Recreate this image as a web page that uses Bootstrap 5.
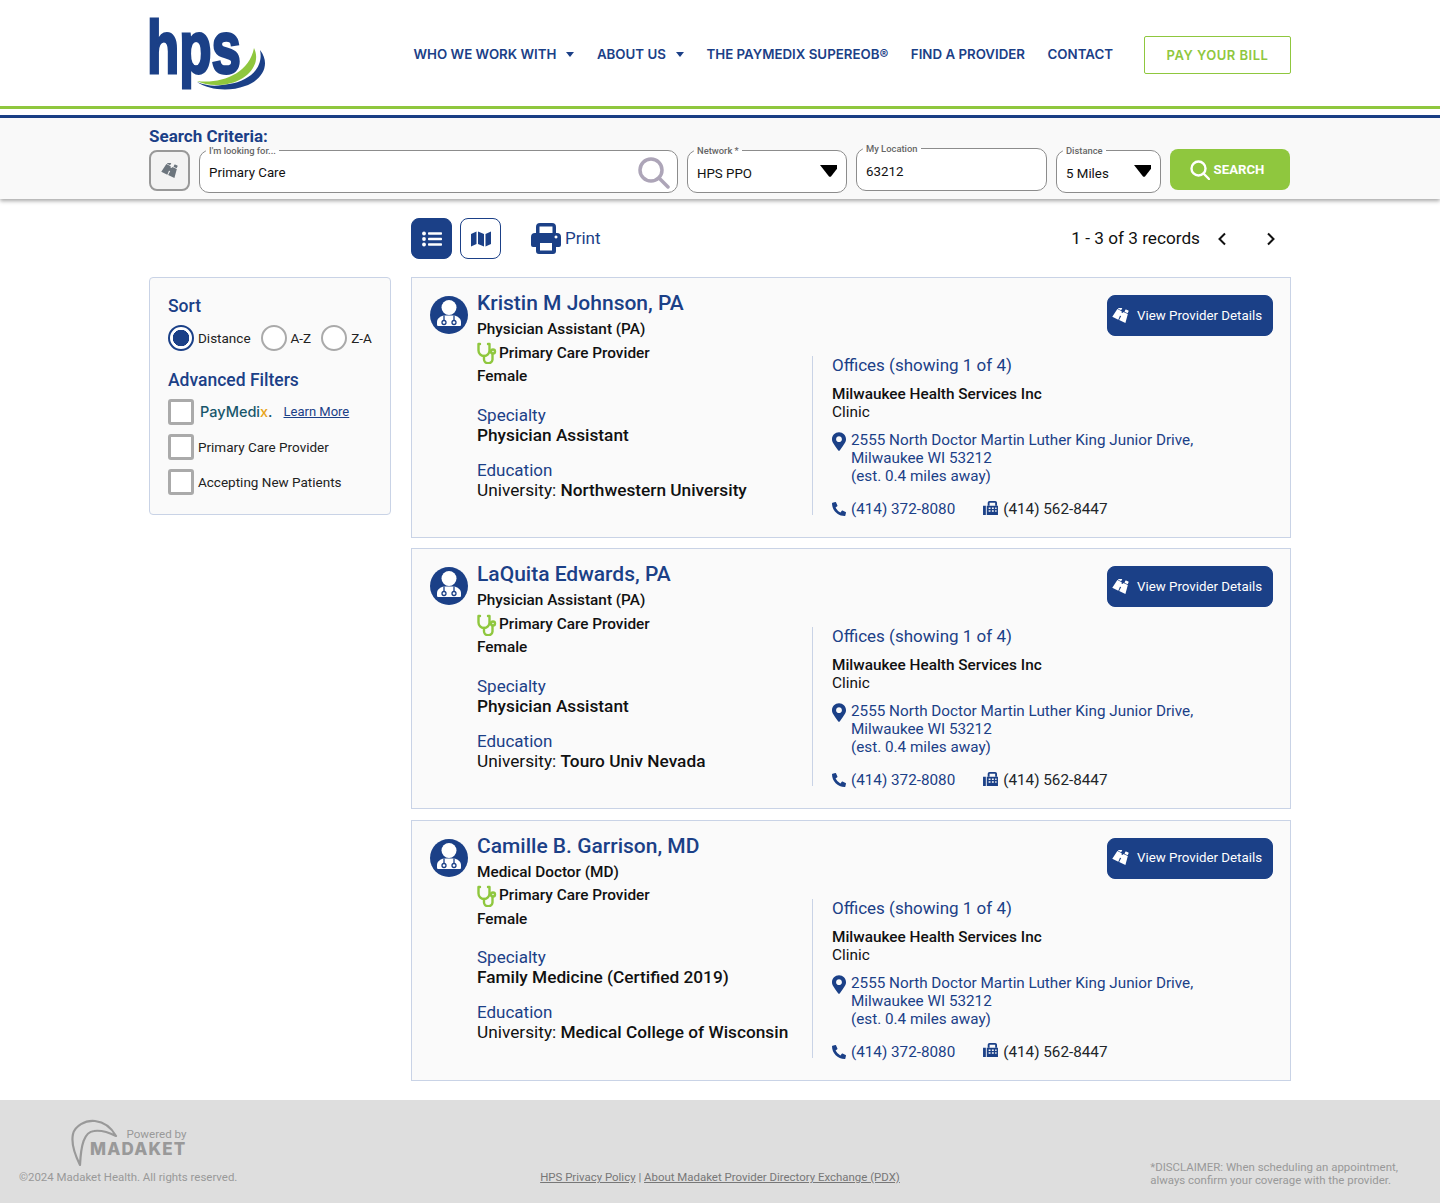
<!DOCTYPE html>
<html lang="en">
<head>
  <meta charset="UTF-8" />
  <meta name="viewport" content="width=device-width, initial-scale=1.0">
  <title>Provider Search</title>
  <link href="https://cdn.jsdelivr.net/npm/bootstrap@5.3.3/dist/css/bootstrap.min.css" rel="stylesheet"/>
  <style>
    :root { --hps-blue: #1b4087; --hps-green: #8fc73e; }
    body { font-family: Roboto, "Liberation Sans", sans-serif; color: #111; background: #fff; }
    .page-wrap { width: 1142px; margin: 0 auto; }

    /* header */
    .site-head { height: 106px; padding-top: 4px; }
    .site-head .nav-link { font-family: Inter, "Liberation Sans", sans-serif; font-size: 13.3px; font-weight: 600; color: var(--hps-blue); padding: 0; white-space: nowrap; }
    .site-head .dropdown-toggle::after { margin-left: 10px; vertical-align: 2px; border-top-width: 5px; border-left-width: 4.5px; border-right-width: 4.5px; }
    .nav-gap { gap: 22.5px; }
    .pay-btn { width: 147px; height: 38px; margin-left: 31px; border: 1px solid var(--hps-green); border-radius: 2px; color: var(--hps-green); font-family: Inter, "Liberation Sans", sans-serif; font-size: 13px; font-weight: 600; letter-spacing: .5px; padding: 0; line-height: 36px; }
    .rule-green { height: 3px; background: var(--hps-green); }
    .rule-blue { height: 3px; margin-top: 6px; background: var(--hps-blue); }

    /* search band */
    .search-band { height: 81px; background: #f9f9f9; box-shadow: 0 2px 4px rgba(0,0,0,.35); padding-top: 9px; position: relative; }
    .search-title { font-size: 17px; font-weight: 700; line-height: 19px; color: var(--hps-blue); margin: 0; }
    .search-row { gap: 9px; }
    .outline-field { border: 1.5px solid #8c8c8c; border-radius: 10px; background: #fff; padding: 0 9px; height: 48px; margin-top: -1px; flex: none; }
    .outline-field legend { float: none; width: auto; font-size: 9.4px; line-height: 11px; font-weight: 500; color: #666; padding: 0 3px; margin: 0 0 0 -3px; }
    .outline-field .form-control, .outline-field .form-select { border: 0; border-radius: 0; padding: 8px 0 2px; font-size: 13.3px; line-height: 20px; color: #111; background-color: transparent; box-shadow: none; }
    .outline-field .form-select { background-image: url("data:image/svg+xml,%3Csvg xmlns='http://www.w3.org/2000/svg' viewBox='0 0 20 12'%3E%3Cpath d='M0 0h20L11 11.500q-1 .5-2 0z'/%3E%3C/svg%3E"); background-size: 20px 12px; background-position: right -3px center; }
    .outline-field .plain-input { padding: 3px 0; }
    .field-high { margin-top: -3px; }
    .square-btn { width: 41px; height: 41px; padding: 0; border-radius: 8px; display: inline-flex; align-items: center; justify-content: center; }
    .binoc-btn { width: 41px; height: 41px; margin-top: 4px; background: #f3f3f3; border: 2px solid #999; border-radius: 8px; padding: 0; flex: none; }
    .search-btn { width: 120px; height: 41px; background: var(--hps-green); color: #fff; border: 0; border-radius: 8px; font-size: 13.2px; font-weight: 700; margin-top: 3px; padding: 0 6px 0 0; flex: none; }
    .search-btn:hover { background: var(--hps-green); color: #fff; }

    /* toolbar */
    .tool-row { height: 41px; margin: 19px 0 18px; padding-left: 262px; }
    .btn-hps { background: var(--hps-blue); border: 1px solid var(--hps-blue); color: #fff; }
    .btn-hps-line { background: #fff; border: 1px solid var(--hps-blue); }
    .print-lnk { color: var(--hps-blue); text-decoration: none; font-size: 17px; margin-left: 30px; }
    .rec-count { font-size: 17.2px; padding-top: 1px; }

    /* sidebar */
    .side-box { width: 242px; height: 238px; flex: none; background: #fafafa; border: 1px solid #c9d3e6; border-radius: 4px; padding: 18px 18px 0; }
    .side-title { font-size: 17.5px; font-weight: 500; line-height: 20px; color: var(--hps-blue); margin: 0; }
    .side-box .form-check-input { width: 26px; height: 26px; margin: 0; flex: none; background-color: #fff; box-shadow: none; }
    .side-box .form-check-input[type=radio] { border: 2px solid #aaa; }
    .side-box .form-check-input[type=radio]:checked { border-color: var(--hps-blue); background: radial-gradient(circle, var(--hps-blue) 0 8px, #fff 8.5px); }
    .side-box .form-check-input[type=checkbox] { border: 3px solid #aaa; border-radius: 3px; }
    .opt-text { font-size: 13.5px; line-height: 20px; color: #222; white-space: nowrap; }
    .opt-label { margin-left: 4px; }
    .opt-label.spaced { margin-right: 10px; }
    .paymedix-name { font-family: Inter, "Liberation Sans", sans-serif; font-size: 14.5px; font-weight: 500; color: #17566b; margin-left: 6px; }
    .paymedix-name b { font-weight: 500; color: #e8a317; }
    .learn-lnk { font-size: 13px; color: var(--hps-blue); margin-left: 11px; }

    /* result cards */
    .result-col { width: 880px; flex: none; }
    .result-box { height: 261px; background: #fafafa; border: 1px solid #c9d3e6; padding: 17px 17px 0 18px; margin-bottom: 10.4px; }
    .result-box:last-child { margin-bottom: 0; }
    .left-col { width: 382px; flex: none; }
    .right-col { flex: 1; }
    .prov-name { font-size: 21px; font-weight: 500; line-height: 24px; color: var(--hps-blue); margin: -4px 0 0; }
    .bold-line { font-size: 15.35px; font-weight: 500; line-height: 23.5px; color: #111; white-space: nowrap; }
    .sect-title { font-size: 17px; line-height: 20px; color: var(--hps-blue); }
    .sect-text { font-size: 17.25px; line-height: 20px; color: #111; white-space: nowrap; }
    .sect-text b { font-weight: 500; }
    .view-btn { width: 166px; height: 41px; padding: 0 6px 0 0; font-size: 13.3px; border-radius: 8px; }
    .view-btn:hover { background: var(--hps-blue); color: #fff; }
    .office-box { border-left: 1px solid #c9d3e6; height: 159px; margin-top: 20px; padding-left: 19px; }
    .office-title { font-size: 17px; line-height: 20px; color: var(--hps-blue); margin-top: -1px; }
    .office-line { font-size: 15.35px; line-height: 18px; color: #111; }
    .addr-link { font-size: 15.25px; line-height: 18px; color: var(--hps-blue); text-decoration: none; white-space: nowrap; }

    /* footer */
    .site-foot { height: 103px; margin-top: 19.2px; background: #dedede; color: #999; font-size: 11.45px; line-height: 13px; padding: 18px 42px 19px 19px; }
    .foot-side { flex: 1; }
    .foot-links { width: 360px; flex: none; color: #777; white-space: nowrap; margin-left: 11.5px; margin-right: -11.5px; }
    .foot-links a { color: #777; }
    .mk-word { font-family: Inter, "Liberation Sans", sans-serif; font-size: 17px; font-weight: 800; letter-spacing: 1.2px; line-height: 17px; color: #999; }
    .mk-by { font-size: 11.6px; line-height: 13px; color: #999; }
  </style>
</head>
<body>

<svg width="0" height="0" class="position-absolute">
  <symbol id="i-binoc" viewBox="0 0 20 18"><g fill="currentColor" transform="rotate(25 10 9)"><rect x="3.500" y="0" width="4" height="3" rx=".6"/><rect x="11.500" y="0" width="4" height="3" rx=".6"/><path d="M3 3.700h5.500L9 14H1.500zM10.500 3.700H16l1.800 10.300H10zM8.500 5h2v4h-2z"/></g></symbol>
  <symbol id="i-pin" viewBox="0 0 384 512"><path fill="currentColor" d="M172.268 501.67C26.97 291.031 0 268.413 0 192 0 85.961 85.961 0 192 0s192 85.961 192 192c0 76.413-26.97 99.031-172.268 309.67-9.535 13.774-29.93 13.773-39.464 0zM192 272c44.183 0 80-35.817 80-80s-35.817-80-80-80-80 35.817-80 80 35.817 80 80 80z"/></symbol>
  <symbol id="i-phone" viewBox="0 0 512 512"><path fill="currentColor" d="M14.610 361.800l112-48a24 24 0 0 1 28 6.900l49.600 60.600A370.660 370.660 0 0 0 381.400 204.110l-60.600-49.600a23.940 23.940 0 0 1-6.900-28l48-112A24.160 24.160 0 0 1 389.400.610l104 24A24 24 0 0 1 512 48c0 256.500-207.900 464-464 464a24 24 0 0 1-23.400-18.600l-24-104a24.290 24.290 0 0 1 14.010-27.600z" transform="matrix(-1 0 0 1 512 0)"/></symbol>
  <symbol id="i-fax" viewBox="0 0 16 15"><path fill="currentColor" fill-rule="evenodd" d="M0 5h3v10H0zM4 5h12v10H4zM6 7v1.500h2V7zm3.500 0v1.500h2V7zm3.500 0v1.500h1.500V7zM6 10v1.500h2V10zm3.500 0v1.500h2V10zm3.500 0v1.500h1.500V10z"/><path d="M6 5V2a1 1 0 0 1 1-1h6a1 1 0 0 1 1 1v3" fill="none" stroke="currentColor" stroke-width="2"/></symbol>
  <symbol id="i-steth" viewBox="0 0 20 22"><g fill="none" stroke="currentColor" stroke-width="2.400" stroke-linecap="round"><path d="M1.500 2v6.500a5.500 5.500 0 0 0 11 0V2M1.500 2H3M12.500 2H11"/><path d="M7 14v2.500a4 4 0 0 0 8.500 1V12"/><circle cx="16" cy="9.500" r="2"/></g></symbol>
  <symbol id="i-doc" viewBox="0 0 38 38"><circle cx="19" cy="19" r="19" fill="currentColor"/><circle cx="19" cy="11.500" r="7.500" fill="#fff"/><path d="M7 28.500V26c0-3.500 3.500-6 7-6.500h10c3.500.5 7 3 7 6.500v2.500c0 1-.5 1.500-1.500 1.500h-21C7.500 30 7 29.500 7 28.500z" fill="#fff"/><g fill="none" stroke="currentColor" stroke-width="1.300"><path d="M14 19.500v5M24 19.500v5"/><circle cx="14" cy="26.500" r="2"/><circle cx="24" cy="26.500" r="2"/></g></symbol>
</svg>

<!-- Header -->
<header class="site-head">
  <div class="page-wrap h-100 d-flex align-items-center justify-content-between">
    <svg width="118" height="72" viewBox="0 0 118 72" class="d-block" overflow="visible" role="img" aria-label="hps" style="margin-top:-2px">
      <path fill="#1b4087" d="M48 64C62 70 72 67 80 66 100 63 115 50 111 32 122 46 114 62 96 68 80 74 60 72 48 64Z"/>
      <path fill="#8fc73e" d="M48 63C72 66 100 56 105 30 113 46 98 66 70 67 62 67.500 54 66 48 63Z"/>
      <text x="-2" y="55" textLength="94" lengthAdjust="spacingAndGlyphs" font-family="Liberation Sans" font-weight="700" font-size="75" fill="#1b4087" stroke="#1b4087" stroke-width="2.800">hps</text>
    </svg>
    <nav class="d-flex align-items-center">
      <ul class="nav nav-gap align-items-center">
        <li class="nav-item"><a class="nav-link dropdown-toggle" href="#">WHO WE WORK WITH</a></li>
        <li class="nav-item"><a class="nav-link dropdown-toggle" href="#">ABOUT US</a></li>
        <li class="nav-item"><a class="nav-link" href="#">THE PAYMEDIX SUPEREOB®</a></li>
        <li class="nav-item"><a class="nav-link" href="#">FIND A PROVIDER</a></li>
        <li class="nav-item"><a class="nav-link" href="#">CONTACT</a></li>
      </ul>
      <a class="btn pay-btn" href="#">PAY YOUR BILL</a>
    </nav>
  </div>
</header>
<div class="rule-green"></div>
<div class="rule-blue"></div>

<!-- Search Criteria -->
<section class="search-band">
  <div class="page-wrap">
    <h2 class="search-title">Search Criteria:</h2>
    <form class="d-flex search-row" onsubmit="return false">
      <button class="binoc-btn text-secondary"><svg width="18" height="16"><use href="#i-binoc"/></svg></button>
      <fieldset class="outline-field" style="width:479px">
        <legend>I'm looking for...</legend>
        <div class="d-flex align-items-center">
          <input class="form-control plain-input" value="Primary Care">
          <svg width="32" height="32" viewBox="0 0 32 32" class="flex-shrink-0" style="margin:1px -2px 0 0"><circle cx="13" cy="13" r="11" fill="none" stroke="#ada5b8" stroke-width="3.500"/><path d="M21 21l9 9" stroke="#ada5b8" stroke-width="3.500" stroke-linecap="round"/></svg>
        </div>
      </fieldset>
      <fieldset class="outline-field" style="width:160px">
        <legend>Network *</legend>
        <select class="form-select"><option>HPS PPO</option></select>
      </fieldset>
      <fieldset class="outline-field field-high" style="width:191px">
        <legend>My Location</legend>
        <input class="form-control" value="63212">
      </fieldset>
      <fieldset class="outline-field" style="width:105px">
        <legend>Distance</legend>
        <select class="form-select"><option>5 Miles</option></select>
      </fieldset>
      <button class="btn search-btn d-flex align-items-center justify-content-center gap-1">
        <svg width="20" height="20" viewBox="0 0 20 20"><circle cx="8.500" cy="8.500" r="7" fill="none" stroke="#fff" stroke-width="2.400"/><path d="M13.500 13.500l5.500 5.500" stroke="#fff" stroke-width="2.400" stroke-linecap="round"/></svg>
        SEARCH
      </button>
    </form>
  </div>
</section>

<main class="page-wrap">
  <!-- View toggle / paging -->
  <div class="tool-row d-flex align-items-center">
    <button class="btn btn-hps square-btn me-2">
      <svg width="20" height="16" viewBox="0 0 20 16" fill="#fff"><circle cx="2" cy="2.500" r="1.900"/><circle cx="2" cy="8" r="1.900"/><circle cx="2" cy="13.500" r="1.900"/><rect x="6" y="1.200" width="14" height="2.600" rx=".8"/><rect x="6" y="6.700" width="14" height="2.600" rx=".8"/><rect x="6" y="12.200" width="14" height="2.600" rx=".8"/></svg>
    </button>
    <button class="btn btn-hps-line square-btn">
      <svg width="20" height="16" viewBox="0 0 20 16" fill="#1b4087"><path d="M0 3l5.500-2.500v12.500L0 15.500zM7 .5l6 2.500v12.500L7 13zM14.500 3L20 .5V13l-5.500 2.500z"/></svg>
    </button>
    <a class="print-lnk d-flex align-items-center gap-1" href="#">
      <svg width="30" height="31" viewBox="0 0 30 31"><path fill="#1b4087" fill-rule="evenodd" d="M5 10V4a4 4 0 0 1 4-4h12a4 4 0 0 1 4 4v6h1a4 4 0 0 1 4 4v8a2 2 0 0 1-2 2h-3v4a3 3 0 0 1-3 3H8a3 3 0 0 1-3-3v-4H2a2 2 0 0 1-2-2v-8a4 4 0 0 1 4-4zM8.500 3.500V10h13V3.500zM9 20v7.500h12V20zm16-7.500a1.500 1.500 0 1 0 .01 0z"/></svg>
      Print
    </a>
    <div class="ms-auto d-flex align-items-center rec-count">
      1 - 3 of 3 records
      <svg width="10" height="14" viewBox="0 0 10 14" style="margin-left:17px"><path d="M8 1.500 2.500 7 8 12.500" fill="none" stroke="#111" stroke-width="2"/></svg>
      <svg width="10" height="14" viewBox="0 0 10 14" style="margin-left:39px;margin-right:15px"><path d="M2 1.500 7.500 7 2 12.500" fill="none" stroke="#111" stroke-width="2"/></svg>
    </div>
  </div>

  <div class="d-flex justify-content-between align-items-start">
    <!-- Filters -->
    <aside class="side-box">
      <h3 class="side-title" style="margin-bottom:9px">Sort</h3>
      <div class="d-flex align-items-center opt-text">
        <input class="form-check-input" type="radio" name="sort" checked><span class="opt-label spaced">Distance</span>
        <input class="form-check-input" type="radio" name="sort"><span class="opt-label spaced">A-Z</span>
        <input class="form-check-input" type="radio" name="sort"><span class="opt-label">Z-A</span>
      </div>
      <h3 class="side-title" style="margin-top:19px;margin-bottom:9px">Advanced Filters</h3>
      <div class="d-flex flex-column" style="gap:9px">
        <div class="d-flex align-items-center">
          <input class="form-check-input" type="checkbox">
          <span class="paymedix-name">PayMedi<b>x</b>.</span>
          <a class="learn-lnk" href="#">Learn More</a>
        </div>
        <div class="d-flex align-items-center opt-text">
          <input class="form-check-input" type="checkbox"><span class="opt-label">Primary Care Provider</span>
        </div>
        <div class="d-flex align-items-center opt-text">
          <input class="form-check-input" type="checkbox"><span class="opt-label">Accepting New Patients</span>
        </div>
      </div>
    </aside>

    <!-- Results -->
    <div class="result-col" id="results"></div>
  </div>
</main>

<footer class="site-foot d-flex align-items-end">
  <div class="foot-side">
    <div class="d-flex align-items-end" style="margin-left:52px;margin-bottom:5px">
      <svg width="48" height="47" viewBox="0 0 48 47" class="flex-shrink-0"><path d="M9 46C3 34 0 24 2 15 4 7 14 1 24 2c9 1 16 6 21 15-8-4-15-6-22-5C13 13 10 26 9 46Z" fill="none" stroke="#999" stroke-width="2.200" stroke-linejoin="round"/></svg>
      <div style="margin-left:-29px;margin-bottom:8px" class="text-end">
        <div class="mk-by">Powered by</div>
        <div class="mk-word">MADAKET</div>
      </div>
    </div>
    <div>©2024 Madaket Health. All rights reserved.</div>
  </div>
  <div class="foot-links text-center"><a href="#">HPS Privacy Policy</a> | <a href="#">About Madaket Provider Directory Exchange (PDX)</a></div>
  <div class="foot-side d-flex justify-content-end">
    <div style="margin-bottom:-3px">*DISCLAIMER: When scheduling an appointment,<br>always confirm your coverage with the provider.</div>
  </div>
</footer>

<script src="https://cdn.jsdelivr.net/npm/bootstrap@5.3.3/dist/js/bootstrap.bundle.min.js"></script>
<script>
  const providers = [
    { name: 'Kristin M Johnson, PA', title: 'Physician Assistant (PA)', specialty: 'Physician Assistant', school: 'Northwestern University' },
    { name: 'LaQuita Edwards, PA', title: 'Physician Assistant (PA)', specialty: 'Physician Assistant', school: 'Touro Univ Nevada' },
    { name: 'Camille B. Garrison, MD', title: 'Medical Doctor (MD)', specialty: 'Family Medicine (Certified 2019)', school: 'Medical College of Wisconsin' }
  ];

  document.getElementById('results').innerHTML = providers.map(p => `
    <article class="result-box d-flex">
      <div class="left-col d-flex">
        <svg width="38" height="38" class="flex-shrink-0" style="color:#1b4087;margin-top:1px;margin-right:9px"><use href="#i-doc"/></svg>
        <div>
          <h4 class="prov-name">${p.name}</h4>
          <div class="bold-line" style="margin-top:3px">${p.title}</div>
          <div class="bold-line d-flex align-items-center"><svg width="20" height="22" style="color:#8fc73e;margin-right:2px"><use href="#i-steth"/></svg>Primary Care Provider</div>
          <div class="bold-line">Female</div>
          <div class="sect-title" style="margin-top:16px">Specialty</div>
          <div class="sect-text"><b>${p.specialty}</b></div>
          <div class="sect-title" style="margin-top:15px">Education</div>
          <div class="sect-text">University: <b>${p.school}</b></div>
        </div>
      </div>
      <div class="right-col d-flex flex-column">
        <a class="btn btn-hps view-btn align-self-end d-flex align-items-center justify-content-center" style="gap:7px" href="#">
          <svg width="18" height="16"><use href="#i-binoc"/></svg>View Provider Details
        </a>
        <div class="office-box">
          <div class="office-title">Offices (showing 1 of 4)</div>
          <div class="office-line fw-medium" style="margin-top:10px">Milwaukee Health Services Inc</div>
          <div class="office-line">Clinic</div>
          <div class="d-flex" style="margin-top:10px">
            <svg width="14" height="19" class="flex-shrink-0" style="color:#1b4087;margin-right:5px;margin-top:1px"><use href="#i-pin"/></svg>
            <a class="addr-link" href="#">2555 North Doctor Martin Luther King Junior Drive,<br>Milwaukee WI 53212<br>(est. 0.4 miles away)</a>
          </div>
          <div class="d-flex align-items-center" style="margin-top:15px">
            <svg width="14" height="14" class="flex-shrink-0" style="color:#1b4087;margin-right:5px"><use href="#i-phone"/></svg>
            <a class="addr-link" href="#">(414) 372-8080</a>
            <svg width="15" height="14" class="flex-shrink-0" style="color:#1b4087;margin-left:28px;margin-right:5px;margin-top:-3px"><use href="#i-fax"/></svg>
            <span class="addr-link text-dark">(414) 562-8447</span>
          </div>
        </div>
      </div>
    </article>
  `).join('');
</script>
</body>
</html>
